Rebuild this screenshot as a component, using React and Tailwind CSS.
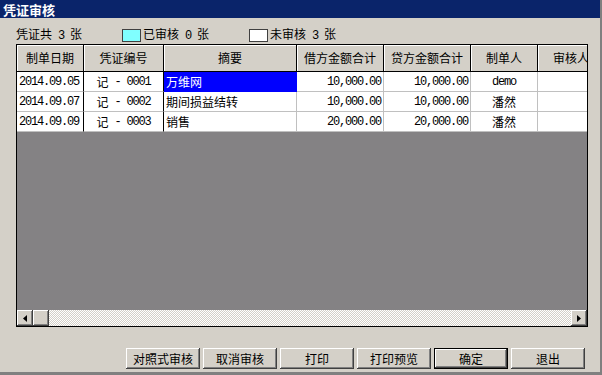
import React from 'react';

const cjk = "font-['Noto_Sans_CJK_SC',sans-serif]";

// SimSun-like half-width run: 6px per character
function M({ children }) {
  return (
    <span className="font-['Liberation_Mono','Noto_Sans_CJK_SC',monospace] text-[12px] tracking-[-1.2px] whitespace-pre text-black">
      {children}
    </span>
  );
}

const cols = [
  { title: '制单日期', w: 'w-[67px]' },
  { title: '凭证编号', w: 'w-[80px]' },
  { title: '摘要', w: 'w-[133px]' },
  { title: '借方金额合计', w: 'w-[87px]' },
  { title: '贷方金额合计', w: 'w-[87px]' },
  { title: '制单人', w: 'w-[67px]' },
  { title: '审核人', w: 'w-[67px]' },
];

const rows = [
  ['2014.09.05', '0001', '万维网', '10,000.00', '10,000.00', 'demo'],
  ['2014.09.07', '0002', '期间损益结转', '10,000.00', '10,000.00', '潘然'],
  ['2014.09.09', '0003', '销售', '20,000.00', '20,000.00', '潘然'],
];

function Raised({ className = '', children }) {
  return (
    <div
      className={`bg-[#d4d0c8] shadow-[inset_-1px_-1px_0_#404040,inset_1px_1px_0_#fff,inset_-2px_-2px_0_#808080] flex items-center justify-center ${className}`}
    >
      {children}
    </div>
  );
}

function Btn({ label, def }) {
  if (def) {
    return (
      <div className="w-[74px] h-[21px] border border-black">
        <Raised className={`w-full h-full text-[12px] text-black ${cjk}`}>{label}</Raised>
      </div>
    );
  }
  return <Raised className={`w-[74px] h-[21px] text-[12px] text-black ${cjk}`}>{label}</Raised>;
}

export default function App() {
  return (
    <div className={`w-[602px] h-[375px] bg-[#d4d0c8] flex flex-col overflow-hidden border-r-2 border-b-[3px] border-r-[#808080] border-b-[#808080] ${cjk}`}>
      {/* title bar */}
      <div className="h-[18px] bg-[#0a246a] flex items-center pl-[3px] shrink-0">
        <span className="text-white text-[13px] font-bold leading-none">凭证审核</span>
      </div>

      {/* status line */}
      <div className="mt-[9px] h-[16px] flex items-center pl-[16px] text-[12px] text-black leading-none">
        <span className="w-[106px]">凭证共<M> 3 </M>张</span>
        <span className="w-[19px] h-[13px] border border-[#404040] bg-[#80ffff]" />
        <span className="w-[106px] ml-[2px]">已审核<M> 0 </M>张</span>
        <span className="w-[19px] h-[13px] border border-[#404040] bg-white" />
        <span className="ml-[2px]">未审核<M> 3 </M>张</span>
      </div>

      {/* grid */}
      <div className="mt-[1px] ml-[16px] w-[572px] h-[283px] border border-black flex flex-col overflow-hidden">
        <div className="flex h-[27px] shrink-0">
          {cols.map((c) => (
            <div
              key={c.title}
              className={`${c.w} shrink-0 h-full bg-[#d4d0c8] border-r border-b border-black shadow-[inset_1px_1px_0_#fff] flex items-center justify-center text-[12px] text-black whitespace-nowrap`}
            >
              {c.title}
            </div>
          ))}
        </div>
        {rows.map((r, i) => (
          <div key={i} className="flex h-[20px] shrink-0 bg-white text-[12px] text-black">
            <div className="w-[67px] shrink-0 border-r border-b border-r-black border-b-[#c0c0c0] flex items-center pl-[2px]">
              <M>{r[0]}</M>
            </div>
            <div className="w-[80px] shrink-0 border-r border-b border-r-black border-b-[#c0c0c0] flex items-center justify-center">
              记<M> - {r[1]}</M>
            </div>
            <div
              className={`w-[133px] shrink-0 border-b flex items-center pl-[2px] ${
                i === 0 ? 'bg-[#0000ff] text-white border-b-[#0000ff] border-r border-r-[#0000ff]' : 'border-r border-[#c0c0c0]'
              }`}
            >
              {r[2]}
            </div>
            <div className="w-[87px] shrink-0 border-r border-b border-[#c0c0c0] flex items-center justify-end pr-[2px]">
              <M>{r[3]}</M>
            </div>
            <div className="w-[87px] shrink-0 border-r border-b border-[#c0c0c0] flex items-center justify-end pr-[2px]">
              <M>{r[4]}</M>
            </div>
            <div className="w-[67px] shrink-0 border-r border-b border-[#c0c0c0] flex items-center justify-center">
              {r[5] === 'demo' ? <M>{r[5]}</M> : r[5]}
            </div>
            <div className="w-[67px] shrink-0 border-r border-b border-[#c0c0c0]" />
          </div>
        ))}
        <div className="flex-1 bg-[#848284]" />
        {/* horizontal scrollbar */}
        <div className="h-[16px] shrink-0 flex bg-[image:repeating-conic-gradient(#ffffff_0_25%,#d4d0c8_0_50%)] bg-size-[2px_2px]">
          <Raised className="w-[16px] h-full shrink-0">
            <svg width="4" height="7" viewBox="0 0 4 7">
              <path d="M4 0 L0 3.5 L4 7 Z" fill="#000" />
            </svg>
          </Raised>
          <Raised className="w-[16px] h-full shrink-0" />
          <div className="flex-1" />
          <Raised className="w-[16px] h-full shrink-0">
            <svg width="4" height="7" viewBox="0 0 4 7">
              <path d="M0 0 L4 3.5 L0 7 Z" fill="#000" />
            </svg>
          </Raised>
        </div>
      </div>

      {/* buttons */}
      <div className="mt-[21px] ml-[126px] flex gap-[3px]">
        <Btn label="对照式审核" />
        <Btn label="取消审核" />
        <Btn label="打印" />
        <Btn label="打印预览" />
        <Btn label="确定" def />
        <Btn label="退出" />
      </div>
    </div>
  );
}
